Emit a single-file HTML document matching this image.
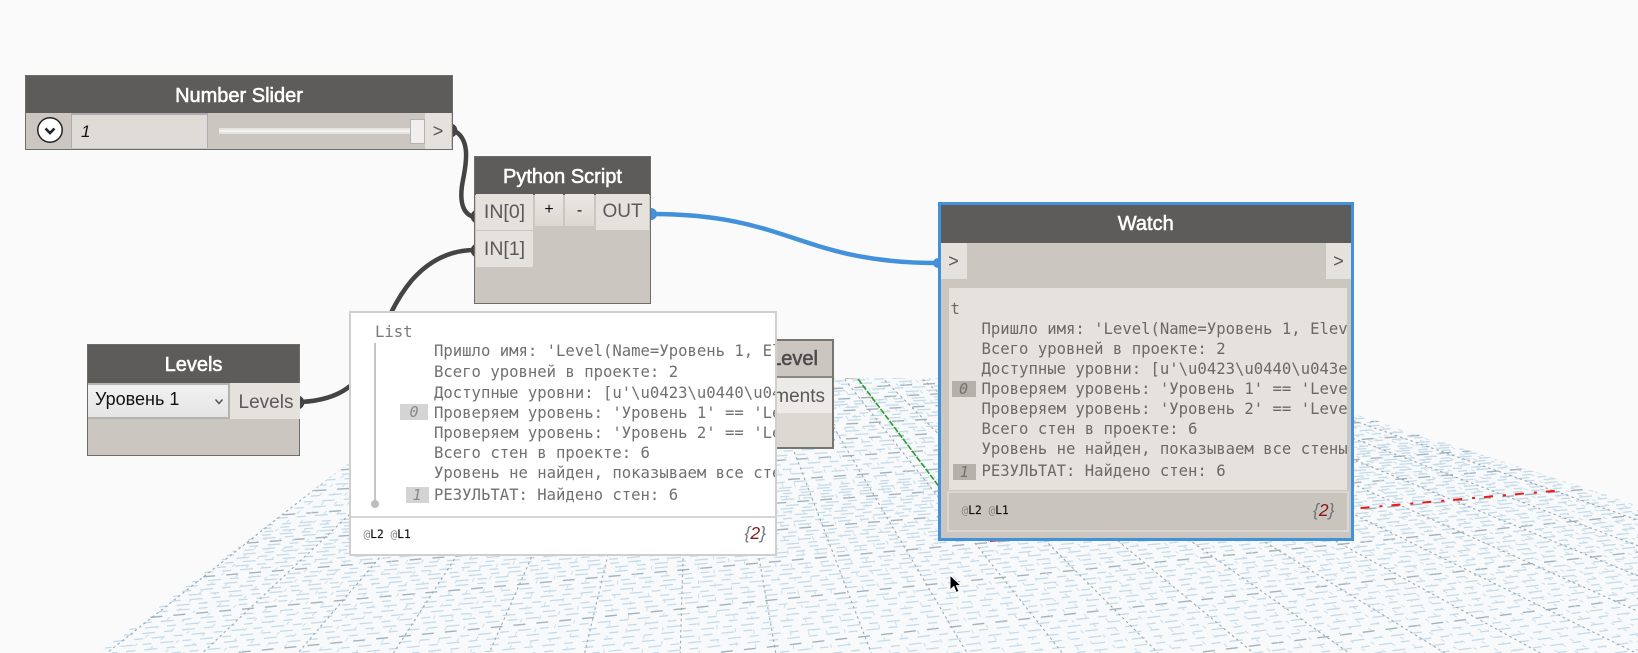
<!DOCTYPE html>
<html><head><meta charset="utf-8"><title>Dynamo graph</title>
<style>
html,body{margin:0;padding:0;background:#fafafa;width:1638px;height:653px;overflow:hidden}
#r{position:relative;width:1638px;height:653px;overflow:hidden;background:#fafafa;font-family:"Liberation Sans",sans-serif}
.a{position:absolute;box-sizing:border-box}
.node{background:#cbc6bf;border:1.5px solid #6f6d69}
.hd{position:absolute;left:0;right:0;top:0;background:#5e5c5a;color:#fff;font:20px/42px "Liberation Sans",sans-serif;-webkit-text-stroke:.55px #fff;text-align:center;height:38px}
.port{position:absolute;background:#e5e1dc;color:#5a5a5c;font-size:19px;line-height:36px;text-align:center}
.m{position:absolute;white-space:pre;font:15.6px/20px "DejaVu Sans Mono",monospace;color:#70706e}
.w{color:#6d6862}
.idx{position:absolute;font:italic 15px/16px "DejaVu Sans Mono",monospace;text-align:center;color:#8a8a8a}
.sm{position:absolute;white-space:pre;font:11.2px/14px "DejaVu Sans Mono",monospace;color:#111;-webkit-text-stroke:.15px #111}
.sm i{font-style:normal;color:#8a8680;-webkit-text-stroke:0}
.cnt{position:absolute;font:italic 17.5px/20px "Liberation Sans",sans-serif;color:#6e7480;white-space:pre}
.cnt b{font-weight:normal;color:#8a1616}
</style></head><body>
<div id="r">
<svg id="g" class="a" style="left:0;top:0" width="1638" height="653" viewBox="0 0 1638 653">
<defs><clipPath id="c"><polygon points="461,378 1244,378 1638,505 1638,653 98,653"/></clipPath></defs>
<polygon points="461,378 1244,378 1638,505 1638,653 98,653" fill="#f8f9fa"/>
<g id="gl" clip-path="url(#c)" fill="none"></g>
<line x1="858" y1="379" x2="980" y2="541" stroke="#2f9a2f" stroke-width="1.6" stroke-dasharray="6 1.500"/>
<line x1="990" y1="541" x2="1564" y2="490" stroke="#f01818" stroke-width="2" stroke-dasharray="9 10 3 9"/>
<path d="M453 130C470 138 467 160 463 180C459 200 462 215 475 217" fill="none" stroke="#444" stroke-width="4.5"/>
<path d="M301 402C340 400 360 385 375 350C385 325 395 300 412 280C428 262 448 250 475 250" fill="none" stroke="#444" stroke-width="4.5"/>
<path d="M652 214C790 214 800 263 938 263" fill="none" stroke="#4291da" stroke-width="4.5"/>
<path d="M453 124a7 7 0 0 1 0 13z" fill="#444"/>
<path d="M475 210a7 7 0 0 0 0 13z" fill="#444"/>
<path d="M475 244a7 7 0 0 0 0 13z" fill="#444"/>
<path d="M300 396a7 7 0 0 1 0 13z" fill="#444"/>
<path d="M651 208a6 6 0 0 1 0 12z" fill="#4291da"/>
<path d="M938 258a5 5 0 0 0 0 10z" fill="#4291da"/>
</svg>

<!-- Number Slider -->
<div class="a node" style="left:25px;top:75px;width:428px;height:75px">
<div class="hd" style="height:37px;line-height:40px">Number Slider</div>
<div class="a" style="left:45px;top:37px;width:137px;height:35px;background:#dfdcd7;border:1.5px solid #adacb0;border-bottom:0;border-top-width:2px;font:italic 17px/33px 'Liberation Sans',sans-serif;color:#111;padding-left:9px">1</div>
<div class="a" style="left:193px;top:52px;width:192px;height:6px;background:#e6e4e1"></div>
<div class="a" style="left:193px;top:54px;width:192px;height:2px;background:#f4f3f1"></div>
<div class="a" style="left:384px;top:43px;width:15px;height:25px;background:#f0efee;border:1.5px solid #b4b2ae"></div>
<div class="a" style="left:399px;top:37px;width:26px;height:36px;background:#e5e1dc;color:#555;font-size:18px;line-height:37px;text-align:center">&gt;</div>
</div>
<svg class="a" style="left:35px;top:115px" width="30" height="32" viewBox="0 0 30 32">
<circle cx="15" cy="16" r="12" fill="#9a9a9a" opacity=".5"/>
<circle cx="15" cy="15" r="12.2" fill="#fff" stroke="#222" stroke-width="1.5"/>
<path d="M10.500 13.500L15 18L19.500 13.500" fill="none" stroke="#222" stroke-width="2.6"/>
</svg>

<!-- Python Script -->
<div class="a node" style="left:474px;top:156px;width:177px;height:148px">
<div class="hd" style="line-height:41px">Python Script</div>
<div class="port" style="left:1px;top:37px;width:57px;height:36px;font-size:19.5px">IN[0]</div>
<div class="port" style="left:1px;top:74px;width:57px;height:36px;font-size:19.5px">IN[1]</div>
<div class="a" style="left:60px;top:37px;width:28px;height:32px;background:linear-gradient(#ebe8e4,#dcd8d2);color:#111;font-size:16px;line-height:31px;text-align:center">+</div>
<div class="a" style="left:90px;top:37px;width:29px;height:32px;background:linear-gradient(#ebe8e4,#dcd8d2);color:#111;font-size:16px;line-height:33px;text-align:center">-</div>
<div class="port" style="left:121px;top:37px;width:53px;height:36px">OUT</div>
</div>

<!-- Levels -->
<div class="a node" style="left:87px;top:344px;width:213px;height:112px">
<div class="hd" style="height:38px;line-height:40px">Levels</div>
<div class="a" style="left:0;top:38px;width:142px;height:36px;background:linear-gradient(#f1f1f1,#e5e5e5);border:2px solid #b4b3b0;border-left:0;font-size:18px;line-height:28px;color:#111;padding-left:7px">Уровень 1</div>
<svg class="a" style="left:125px;top:52px" width="12" height="10" viewBox="0 0 12 10"><path d="M2.500 2.500L6 6.500L9.500 2.500" fill="none" stroke="#555" stroke-width="1.500"/></svg>
<div class="port" style="left:142px;top:38px;width:68px;height:36px;line-height:39px;padding-left:2px">Levels</div>
</div>

<!-- Level node behind popup -->
<div class="a" style="left:740px;top:338.500px;width:94px;height:110px;background:#dcd9d3;border:2px solid #777572;overflow:hidden">
<div class="a" style="left:0;top:0;width:100%;height:37px;background:#cbc6bf;border-bottom:2px solid #8a8884;color:#4b4b4d;font:20px/37px 'Liberation Sans',sans-serif;-webkit-text-stroke:.55px #4b4b4d;text-align:right;padding-right:14px">Level</div>
<div class="a" style="left:0;top:37px;width:100%;height:35px;background:#edebe7;color:#58585a;font-size:19px;line-height:37px;text-align:right;padding-right:7px">Elements</div>
</div>

<!-- Popup -->
<div class="a" style="left:349px;top:310.500px;width:428px;height:245px;background:#fff;border:2px solid #cfcfcf;overflow:hidden">
<div class="m" style="left:24px;top:9px;color:#7a7a78">List</div>
<div class="a" style="left:23px;top:30px;width:2px;height:160px;background:#c4c4c4"></div>
<div class="a" style="left:20px;top:187px;width:8px;height:8px;border-radius:50%;background:#bdbdbd"></div>
<div class="idx" style="left:49px;top:91.500px;width:28px;background:#d4d4d4">0</div>
<div class="idx" style="left:54.500px;top:174.500px;width:23px;background:#d4d4d4">1</div>
<div class="m" style="left:83px;top:28.500px">Пришло имя: 'Level(Name=Уровень 1, Elevation=0)'</div>
<div class="m" style="left:83px;top:49.500px">Всего уровней в проекте: 2</div>
<div class="m" style="left:83px;top:70px">Доступные уровни: [u'\u0423\u0440\u043e\u0432\u0435\u043d\u044c 1']</div>
<div class="m" style="left:83px;top:90px">Проверяем уровень: 'Уровень 1' == 'Level'</div>
<div class="m" style="left:83px;top:110px">Проверяем уровень: 'Уровень 2' == 'Level'</div>
<div class="m" style="left:83px;top:130px">Всего стен в проекте: 6</div>
<div class="m" style="left:83px;top:150px">Уровень не найден, показываем все стены</div>
<div class="m" style="left:83px;top:172px">РЕЗУЛЬТАТ: Найдено стен: 6</div>
<div class="a" style="left:0;top:203.500px;width:100%;height:2px;background:#d6d6d6"></div>
<div class="sm" style="left:12.500px;top:215.500px"><i>@</i>L2 <i>@</i>L1</div>
<div class="cnt" style="right:9px;top:210.500px">{<b>2</b>}</div>
</div>

<!-- Watch -->
<div class="a" style="left:937.500px;top:202px;width:416.500px;height:339px;background:#cbc6bf;border:3px solid #4291da">
<div class="hd" style="height:38px;line-height:39px">Watch</div>
<div class="a" style="left:0;top:38px;width:26px;height:36px;background:#e5e1dc;color:#555;font-size:18px;line-height:37px;text-align:center">&gt;</div>
<div class="a" style="right:0;top:38px;width:25px;height:36px;background:#e5e1dc;color:#555;font-size:18px;line-height:37px;text-align:center">&gt;</div>
<div class="a" style="left:8px;top:83px;width:398px;height:202px;background:#e5e1dc;overflow:hidden">
<div class="m w" style="left:2px;top:10.500px">t</div>
<div class="idx" style="left:3px;top:93px;width:24px;background:#b5b0aa;color:#77726d">0</div>
<div class="idx" style="left:4.500px;top:176px;width:22.500px;background:#b5b0aa;color:#77726d">1</div>
<div class="m w" style="left:33px;top:31px">Пришло имя: 'Level(Name=Уровень 1, Elevation=0)'</div>
<div class="m w" style="left:33px;top:51px">Всего уровней в проекте: 2</div>
<div class="m w" style="left:33px;top:71px">Доступные уровни: [u'\u0423\u0440\u043e\u0432\u0435\u043d\u044c 1']</div>
<div class="m w" style="left:33px;top:91px">Проверяем уровень: 'Уровень 1' == 'Level'</div>
<div class="m w" style="left:33px;top:111px">Проверяем уровень: 'Уровень 2' == 'Level'</div>
<div class="m w" style="left:33px;top:131px">Всего стен в проекте: 6</div>
<div class="m w" style="left:33px;top:151px">Уровень не найден, показываем все стены</div>
<div class="m w" style="left:33px;top:172.500px">РЕЗУЛЬТАТ: Найдено стен: 6</div>
</div>
<div class="a" style="left:6px;top:285.500px;width:402px;height:41.500px;border:2px solid #dad6d0;background:#c9c4bd">
<div class="sm" style="left:13px;top:11.500px"><i>@</i>L2 <i>@</i>L1</div>
<div class="cnt" style="right:12px;top:7.500px">{<b>2</b>}</div>
</div>
</div>

<svg class="a" style="left:945px;top:571px" width="20" height="26" viewBox="0 0 20 26">
<path d="M5 4L5 19L8.800 15.600L11.200 21.500L14 20.300L11.500 14.700L16 14.500Z" fill="#000" stroke="#fff" stroke-width="1"/>
</svg>
</div>
<script>
(function(){
var h=185,vx=5000,fx=694,fy=190,parts=[];
function el(d,s,w,da,off){return '<path d="'+d+'" stroke="'+s+'" stroke-width="'+w+'" stroke-dasharray="'+da+'" stroke-dashoffset="'+off+'"/>';}
var last=1e9;
for(var k=-36;k<240;k++){
 var inv=.00231+k*.00003;
 var yL=h+1/inv;if(yL<376)break;
 var xL=98+(653-yL)/.757;
 var sl=(yL-h)/(vx-xL);
 var xS=xL,yS=yL;
 if(yL>653){xS=xL+(yL-653)/sl;yS=653;}
 if(xS>1638)continue;
 var xE=1638;
 var yE=yL-sl*(xE-xL);
 var d="M"+xS.toFixed(1)+" "+yS.toFixed(1)+"L"+xE+" "+yE.toFixed(1);
 var isM=((k%8)+8)%8==0;
 if(isM){parts.push(el(d,"#a3b3bc",1.4,"12 11",(k*3+63)%23));last=yL;}
 else if(Math.abs(last-yL)>=3.5){
  var o=(k*k*7+k*13+400)%27;
  parts.push(el(d,"#c3dae8",1.25,"13 9 9 9",o));last=yL;
 }
}
for(var i=0;i<=210;i++){
 var x=98+i*9.7;
 var d2="M"+fx+" "+fy+"L"+(fx+(x-fx)*(653-fy)/(660-fy)).toFixed(1)+" 653";
 if(i%10==0){parts.push(el(d2,"#9aa8b0",1.1,"2.500 3",0));}
 else if(i%2==0){parts.push(el(d2,"#cbdeea",1,"4 10",(i*5)%14));}
}
document.getElementById("gl").innerHTML=parts.join("");
})();
</script>
</body></html>
